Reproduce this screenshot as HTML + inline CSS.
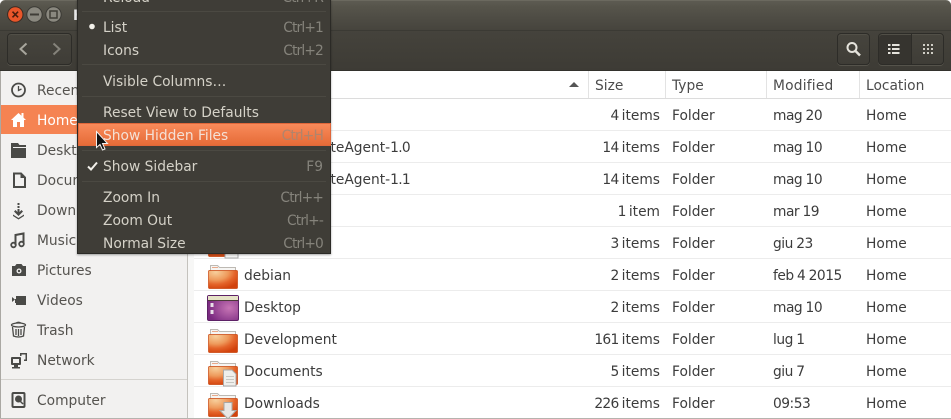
<!DOCTYPE html>
<html><head><meta charset="utf-8"><style>
html,body{margin:0;padding:0;background:#8f8d88}
#w{position:relative;width:951px;height:419px;overflow:hidden;font:13.8px/20px "DejaVu Sans",sans-serif;color:#3c3c3c;background:#fff}
#w div{position:absolute}
#w .t{white-space:nowrap;margin-top:1px}
.h{top:75px;color:#4c4c4c}
.s{color:#55534f;left:37px}
.m{color:#d5d2c8;left:103px;z-index:6}
.a{color:#85837b;right:628px;z-index:6;letter-spacing:-.85px}
.sep{left:82px;width:244px;height:1px;background:#4b4942;z-index:6}
.l{left:194px;right:0;height:1px;background:#ececec}
.b{border:1px solid #2d2c28;border-radius:4px;box-shadow:0 1px 0 #55534b,inset 0 1px 0 #514f47;background:linear-gradient(#46443d,#3f3d37);box-sizing:border-box}
.hs{top:71px;width:1px;height:27px;background:#e3e3e3}
.n{letter-spacing:-.7px;word-spacing:-.6px}
.d{letter-spacing:-.5px;word-spacing:-.5px}
</style></head><body><div id="w">
<div style="left:0;top:0;width:951px;height:30px;background:linear-gradient(#5d5b52,#56544b 20%,#46443d);border-top:1px solid #6b695f;box-sizing:border-box;border-radius:5px 5px 0 0"></div>
<div style="left:0;top:30px;width:951px;height:40px;background:linear-gradient(#45433c,#3d3b35);border-top:1px solid #3b3a34;box-sizing:border-box"></div>
<div style="left:0;top:70px;width:951px;height:1px;background:#33322d"></div>
<div class="t" style="left:73px;top:5px;color:#eee;font-weight:bold">H</div>
<div class="b" style="left:7px;top:33px;width:65px;height:32px"></div>
<div class="b" style="left:837px;top:33px;width:33px;height:32px"></div>
<div class="b" style="left:878px;top:33px;width:34px;height:32px;background:#36342f;border-radius:4px 0 0 4px"></div>
<div class="b" style="left:911px;top:33px;width:33px;height:32px;border-radius:0 4px 4px 0"></div>

<!-- sidebar -->
<div style="left:0;top:71px;width:188px;height:347px;background:#f2f1f0;border-left:1px solid #aaa8a3;border-right:1px solid #c4c2bd;box-sizing:border-box"></div>
<div style="left:188px;top:71px;width:6px;height:347px;background:#f7f7f6"></div>
<div style="left:1px;top:105px;width:186px;height:29px;background:#f58352"></div>
<div style="left:1px;top:379px;width:186px;height:1px;background:#d5d3cf"></div>
<div style="left:0;top:418px;width:951px;height:1px;background:#b5b3ae"></div>
<div class="t s" style="top:80px">Recent</div>
<div class="t s" style="top:110px;color:#fff">Home</div>
<div class="t s" style="top:140px">Desktop</div>
<div class="t s" style="top:170px">Documents</div>
<div class="t s" style="top:200px">Downloads</div>
<div class="t s" style="top:230px">Music</div>
<div class="t s" style="top:260px">Pictures</div>
<div class="t s" style="top:290px">Videos</div>
<div class="t s" style="top:320px">Trash</div>
<div class="t s" style="top:350px">Network</div>
<div class="t s" style="top:390px">Computer</div>

<!-- header -->
<div class="hs" style="left:588px"></div><div class="hs" style="left:665px"></div><div class="hs" style="left:766px"></div><div class="hs" style="left:859px"></div>
<div style="left:194px;top:98px;width:757px;height:1px;background:#dcdcdc"></div>
<div class="t h" style="left:595px">Size</div><div class="t h" style="left:672px">Type</div><div class="t h" style="left:773px;letter-spacing:.2px">Modified</div><div class="t h" style="left:866px">Location</div>

<!-- row lines -->
<div class="l" style="top:130px"></div><div class="l" style="top:162px"></div><div class="l" style="top:194px"></div><div class="l" style="top:226px"></div><div class="l" style="top:258px"></div><div class="l" style="top:290px"></div><div class="l" style="top:322px"></div><div class="l" style="top:354px"></div><div class="l" style="top:386px"></div>

<!-- rows -->
<div class="t" style="right:291px;top:105px"><span class="n">4 </span>items</div><div class="t" style="left:672px;top:105px">Folder</div><div class="t d" style="left:773px;top:105px">mag 20</div><div class="t" style="left:866px;top:105px">Home</div>
<div class="t" style="right:541px;top:137px">teAgent-<span class="n">1.0</span></div><div class="t" style="right:291px;top:137px"><span class="n">14 </span>items</div><div class="t" style="left:672px;top:137px">Folder</div><div class="t d" style="left:773px;top:137px">mag 10</div><div class="t" style="left:866px;top:137px">Home</div>
<div class="t" style="right:541px;top:169px">teAgent-<span class="n">1.1</span></div><div class="t" style="right:291px;top:169px"><span class="n">14 </span>items</div><div class="t" style="left:672px;top:169px">Folder</div><div class="t d" style="left:773px;top:169px">mag 10</div><div class="t" style="left:866px;top:169px">Home</div>
<div class="t" style="right:291px;top:201px"><span class="n">1 </span>item</div><div class="t" style="left:672px;top:201px">Folder</div><div class="t d" style="left:773px;top:201px">mar 19</div><div class="t" style="left:866px;top:201px">Home</div>
<div class="t" style="right:291px;top:233px"><span class="n">3 </span>items</div><div class="t" style="left:672px;top:233px">Folder</div><div class="t d" style="left:773px;top:233px">giu 23</div><div class="t" style="left:866px;top:233px">Home</div>
<div class="t" style="left:244px;top:265px">debian</div><div class="t" style="right:291px;top:265px"><span class="n">2 </span>items</div><div class="t" style="left:672px;top:265px">Folder</div><div class="t d" style="left:773px;top:265px">feb 4 2015</div><div class="t" style="left:866px;top:265px">Home</div>
<div class="t" style="left:244px;top:297px">Desktop</div><div class="t" style="right:291px;top:297px"><span class="n">2 </span>items</div><div class="t" style="left:672px;top:297px">Folder</div><div class="t d" style="left:773px;top:297px">mag 10</div><div class="t" style="left:866px;top:297px">Home</div>
<div class="t" style="left:244px;top:329px">Development</div><div class="t" style="right:291px;top:329px"><span class="n">161 </span>items</div><div class="t" style="left:672px;top:329px">Folder</div><div class="t d" style="left:773px;top:329px">lug 1</div><div class="t" style="left:866px;top:329px">Home</div>
<div class="t" style="left:244px;top:361px">Documents</div><div class="t" style="right:291px;top:361px"><span class="n">5 </span>items</div><div class="t" style="left:672px;top:361px">Folder</div><div class="t d" style="left:773px;top:361px">giu 7</div><div class="t" style="left:866px;top:361px">Home</div>
<div class="t" style="left:244px;top:393px">Downloads</div><div class="t" style="right:291px;top:393px"><span class="n">226 </span>items</div><div class="t" style="left:672px;top:393px">Folder</div><div class="t d" style="left:773px;top:393px">09:53</div><div class="t" style="left:866px;top:393px">Home</div>

<svg width="951" height="419" viewBox="0 0 951 419" style="position:absolute;left:0;top:0;z-index:2">
<defs>
<radialGradient id="fg" cx=".25" cy=".1" r=".95"><stop offset="0" stop-color="#f7cf9c"/><stop offset=".45" stop-color="#ee9a5c"/><stop offset=".7" stop-color="#e4642a"/><stop offset="1" stop-color="#d2420c"/></radialGradient>
<radialGradient id="pg" cx=".7" cy=".5" r=".7"><stop offset="0" stop-color="#c775b5"/><stop offset="1" stop-color="#7a2a80"/></radialGradient>
<g id="f"><path d="M2.500 .5h7l2 2h16v6h-25z" fill="#f6f5f3" stroke="#bdb9b3"/><rect x="4" y="2" width="6" height="1" fill="#e9a98a"/><rect x=".5" y="5.500" width="29" height="18" rx="1" fill="url(#fg)" stroke="#c9460f" stroke-width=".7"/></g>
</defs>
<!-- window buttons -->
<circle cx="15.300" cy="14.500" r="7.700" fill="#e9562a" stroke="#3a2a22"/><path d="M12.500 11.700l5.600 5.600M18.100 11.700l-5.600 5.600" stroke="#4a1d0d" stroke-width="1.600"/>
<circle cx="34.500" cy="14.500" r="7.700" fill="#8a887f" stroke="#3a3934"/><rect x="30" y="13.500" width="9" height="2" fill="#3f3d37"/>
<circle cx="53.500" cy="14.500" r="7.700" fill="#8a887f" stroke="#3a3934"/><rect x="50" y="11" width="7" height="7" fill="none" stroke="#3f3d37" stroke-width="1.500"/>
<!-- nav -->
<path d="M26.500 43.500l-6 5.500 6 5.500" fill="none" stroke="#a8a69d" stroke-width="2"/><path d="M53.500 43.500l6 5.500-6 5.500" fill="none" stroke="#85837b" stroke-width="2"/>
<!-- search -->
<circle cx="852" cy="47.500" r="4.500" fill="none" stroke="#e5e3dc" stroke-width="2"/><path d="M855.500 51l4.500 4.500" stroke="#e5e3dc" stroke-width="2.500"/>
<!-- view icons -->
<g fill="#e5e3dc"><rect x="888" y="44" width="2.500" height="2"/><rect x="892" y="44" width="7.500" height="2"/><rect x="888" y="48" width="2.500" height="2"/><rect x="892" y="48" width="7.500" height="2"/><rect x="888" y="52" width="2.500" height="2"/><rect x="892" y="52" width="7.500" height="2"/></g>
<g fill="#d0cec6"><rect x="923" y="44" width="2" height="2"/><rect x="927" y="44" width="2" height="2"/><rect x="931" y="44" width="2" height="2"/><rect x="923" y="48" width="2" height="2"/><rect x="927" y="48" width="2" height="2"/><rect x="931" y="48" width="2" height="2"/><rect x="923" y="52" width="2" height="2"/><rect x="927" y="52" width="2" height="2"/><rect x="931" y="52" width="2" height="2"/></g>
<!-- sort arrow -->
<path d="M569 87l5-5 5 5z" fill="#555"/>
<!-- sidebar icons -->
<circle cx="18.500" cy="90" r="6.500" fill="none" stroke="#4a4a47" stroke-width="1.800"/><path d="M18.500 86v4.500l3-1.500" fill="none" stroke="#4a4a47" stroke-width="1.300"/>
<path d="M11 120l7.500-7 3 2.800V113h2v4.600l2.500 2.400h-2v7h-4v-5h-3v5h-4v-7z" fill="#fff"/>
<path d="M11 143h7l1.500 2H26v13H11z" fill="#4a4a47"/><rect x="13" y="147" width="13" height="1" fill="#f2f1f0"/>
<path d="M14 173.500h7l4 4v9.500H14z" fill="none" stroke="#4a4a47" stroke-width="2"/><path d="M20.500 173.500v4.500h4.500" fill="#4a4a47"/>
<g fill="#4a4a47"><rect x="17.500" y="203" width="2" height="2"/><rect x="17.500" y="206" width="2" height="2"/><path d="M17.500 209h2v3l2-2 1.500 1.500-4.500 4.500-4.500-4.500 1.500-1.500 2 2z"/><path d="M13 214.500l5.500 3.500 5.500-3.500V216l-5.500 3.500L13 216z"/></g>
<path d="M15.500 245v-10l8-1.500V243" fill="none" stroke="#4a4a47" stroke-width="2"/><circle cx="13.500" cy="245" r="2.300" fill="none" stroke="#4a4a47" stroke-width="1.800"/><circle cx="21.500" cy="244" r="2.300" fill="none" stroke="#4a4a47" stroke-width="1.800"/>
<path d="M12 266h3l1.500-2h5l1.500 2h3v10H12z" fill="#4a4a47"/><circle cx="19" cy="271" r="2.500" fill="#f2f1f0"/><circle cx="19" cy="271" r="1.200" fill="#4a4a47"/>
<rect x="16" y="296" width="10" height="9" fill="#4a4a47"/><path d="M12 297l3 2.500-3 2.500z" fill="#4a4a47"/><rect x="15" y="299" width="1" height="4" fill="#4a4a47"/>
<g fill="none" stroke="#4a4a47" stroke-width="1.300"><ellipse cx="18.500" cy="325" rx="7" ry="2"/><path d="M12.500 327l1 9q5 2 10 0l1-9"/><path d="M16 329v6M18.500 329v7M21 329v6"/><path d="M16 323q2.500-1.500 5 0"/></g>
<g fill="#4a4a47"><rect x="11" y="357" width="10" height="8" rx="1"/><rect x="14" y="365" width="4" height="2"/><rect x="12" y="367" width="8" height="1.500"/><path d="M20 353h7v8h-3v-1.500h1.500V354.500H21.500V356H20z"/></g><rect x="13" y="359" width="6" height="4" fill="#f2f1f0"/>
<rect x="12.500" y="393" width="12" height="14" rx="1" fill="none" stroke="#4a4a47" stroke-width="2"/><circle cx="18.500" cy="399" r="3.500" fill="#4a4a47"/><path d="M19 400l4 4" stroke="#4a4a47" stroke-width="1.500"/>
<!-- folders -->
<use href="#f" x="208" y="233"/>
<rect x="225" y="248" width="13" height="10" fill="#f6f6f5" stroke="#aaa"/>
<use href="#f" x="208" y="265"/>
<rect x="207.500" y="295.500" width="31" height="25" rx="1.500" fill="url(#pg)" stroke="#5d2166"/><rect x="208" y="296" width="30" height="4" fill="#e6e2c6"/><rect x="208" y="300" width="30" height="1" fill="#4c3a3a"/><rect x="210.500" y="303" width="3" height="4" fill="#e8dfe8"/><rect x="210.500" y="310" width="3" height="4" fill="#e8dfe8"/>
<use href="#f" x="208" y="329"/>
<use href="#f" x="208" y="361"/>
<path d="M223.500 370h8.500l4 4v12h-12.500z" fill="#efefec" stroke="#aaa"/><g fill="#c7c7c3"><rect x="226" y="376" width="8" height="1"/><rect x="226" y="379" width="8" height="1"/><rect x="226" y="382" width="8" height="1"/></g>
<use href="#f" x="208" y="393"/>
<path d="M224 402.500h8v8h4l-8 8.500-8-8.500h4z" fill="#e8e7e4" stroke="#a9a7a2"/>
</svg>

<!-- menu -->
<div style="left:77px;top:-2px;width:254px;height:256px;background:#3f3d37;border:1px solid #2b2a26;box-sizing:border-box;z-index:5;box-shadow:0 1px 2px rgba(0,0,0,.35)"></div>
<div class="t m" style="top:-13px">Reload</div><div class="t a" style="top:-13px">Ctrl+R</div>
<div class="sep" style="top:11px"></div>
<div class="t m" style="top:17px">List</div><div class="t a" style="top:17px">Ctrl+1</div>
<div class="t m" style="top:40px">Icons</div><div class="t a" style="top:40px">Ctrl+2</div>
<div class="sep" style="top:64px"></div>
<div class="t m" style="top:71px">Visible Columns…</div>
<div class="sep" style="top:96px"></div>
<div class="t m" style="top:102px">Reset View to Defaults</div>
<div style="left:78px;top:123px;width:253px;height:23px;background:linear-gradient(#f98c5c,#e56a36);box-shadow:inset 0 0 0 1px #e0673a;z-index:6"></div>
<div class="t m" style="top:125px;color:#f4e0d5;z-index:7">Show Hidden Files</div><div class="t a" style="top:125px;color:#b0846c;z-index:7">Ctrl+H</div>
<div class="sep" style="top:150px"></div>
<div class="t m" style="top:156px">Show Sidebar</div><div class="t a" style="top:156px;letter-spacing:0">F9</div>
<div class="sep" style="top:181px"></div>
<div class="t m" style="top:187px">Zoom In</div><div class="t a" style="top:187px">Ctrl++</div>
<div class="t m" style="top:210px">Zoom Out</div><div class="t a" style="top:210px">Ctrl+-</div>
<div class="t m" style="top:233px">Normal Size</div><div class="t a" style="top:233px">Ctrl+0</div>

<svg width="951" height="419" viewBox="0 0 951 419" style="position:absolute;left:0;top:0;z-index:8">
<circle cx="92" cy="26.500" r="2.800" fill="#f2f0ea"/>
<path d="M88 166.500l3 3 6-7" fill="none" stroke="#f2f0ea" stroke-width="2"/>
<path d="M96.500 131.500v16l3.500-3 2.500 5.500 2.500-1-2.500-5.500h5z" fill="#111" stroke="#f0f0f0" stroke-width="1"/>
</svg>
</div></body></html>
